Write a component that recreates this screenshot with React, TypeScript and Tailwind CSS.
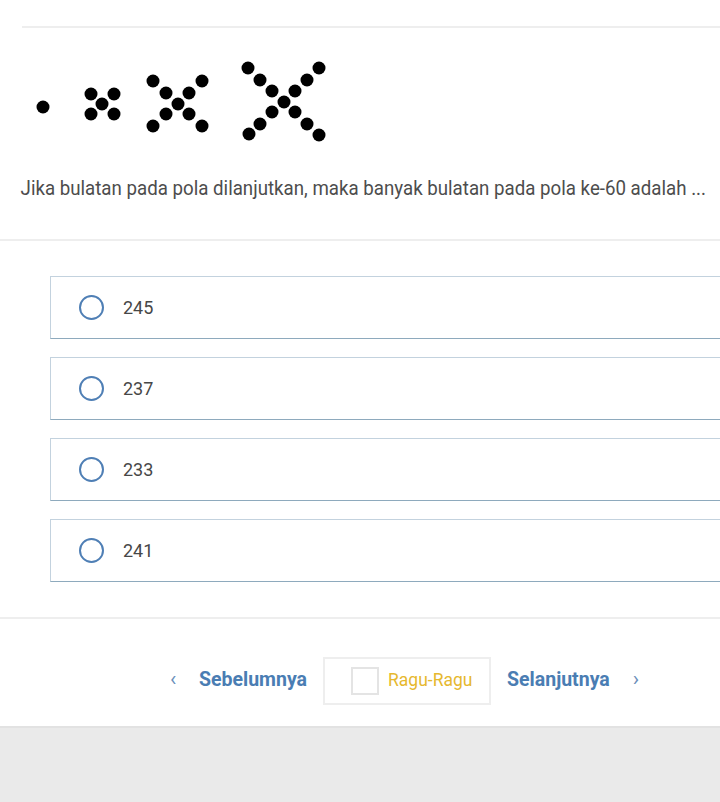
import React from "react";

const dots: [number, number][] = [
  [43, 107],
  [91, 94], [114, 94], [102, 104], [91, 114], [114, 114],
  [153, 81], [202, 81], [166, 93], [189, 93], [178, 104], [166, 114], [189, 114], [153, 126], [202, 126],
  [248, 68], [260, 80], [272, 91], [295, 91], [307, 80], [319, 68], [284, 102], [272, 112], [295, 112], [260, 124], [249, 134], [307, 124], [319, 135],
];

function Option({ label }: { label: string }) {
  return (
    <div className="ml-[50px] w-[720px] h-[63px] border border-[#c3d2de] border-b-[#8eaabd] flex items-center bg-white">
      <div className="ml-[28px] w-[25px] h-[25px] rounded-full border-[2.5px] border-[#4f7fb5]" />
      <div className="ml-[19px] text-[18px] text-[#474747] font-['Roboto',sans-serif]">{label}</div>
    </div>
  );
}

export default function App() {
  return (
    <div className="w-[720px] h-[802px] overflow-hidden bg-white font-['Roboto',sans-serif]">
      <div className="h-[26px]" />
      <div className="ml-[22px] h-[2px] bg-[#eeeeee]" />
      <div className="h-[27px]" />
      <svg width="340" height="92" viewBox="0 55 340 92" className="block">
        {dots.map(([x, y], i) => (
          <circle key={i} cx={x} cy={y} r={6.5} fill="#000" />
        ))}
      </svg>
      <div className="h-[28px]" />
      <div className="pl-[22px] text-[20px] leading-[26px] text-[#4d4d4d] whitespace-nowrap font-['Roboto',sans-serif] scale-x-[0.935] origin-left">
        Jika bulatan pada pola dilanjutkan, maka banyak bulatan pada pola ke-60 adalah ...
      </div>
      <div className="h-[38px]" />
      <div className="h-[2px] bg-[#eeeeee]" />
      <div className="h-[35px]" />
      <div className="flex flex-col gap-[18px]">
        <Option label="245" />
        <Option label="237" />
        <Option label="233" />
        <Option label="241" />
      </div>
      <div className="h-[35px]" />
      <div className="h-[2px] bg-[#eeeeee]" />
      <div className="h-[38px]" />
      <div className="flex items-center h-[48px]">
        <div className="ml-[170px] w-[11px] text-[21px] text-[#6a8fba] leading-none pb-[4px]">‹</div>
        <div className="ml-[18px] text-[19.5px] font-bold text-[#4a7db3] pb-[3px]">Sebelumnya</div>
        <div className="ml-[16px] w-[168px] h-[48px] border-2 border-[#eeeeee] flex items-center shrink-0">
          <div className="ml-[26px] w-[28px] h-[28px] border-2 border-[#e4e4e4]" />
          <div className="ml-[9px] text-[17.5px] text-[#e6b82e] pb-[2px]">Ragu-Ragu</div>
        </div>
        <div className="ml-[16px] text-[19.5px] font-bold text-[#4a7db3] pb-[3px]">Selanjutnya</div>
        <div className="ml-[23px] text-[21px] text-[#6a8fba] leading-none pb-[4px]">›</div>
      </div>
      <div className="h-[21px]" />
      <div className="h-[2px] bg-[#e2e2e2]" />
      <div className="h-[200px] bg-[#eaeaea]" />
    </div>
  );
}
